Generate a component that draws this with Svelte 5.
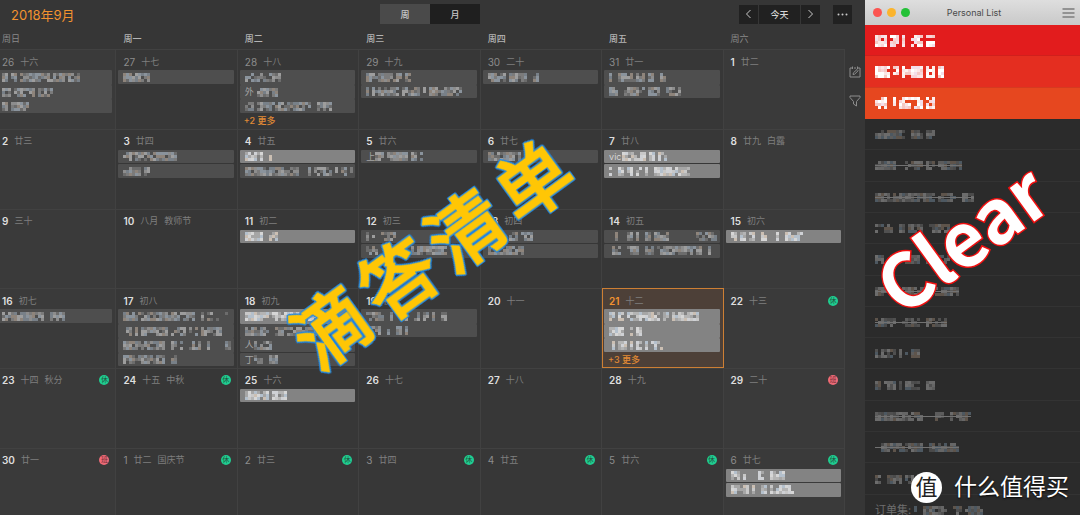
<script>
  const weekdays = ['周日', '周一', '周二', '周三', '周四', '周五', '周六'];

  // runs are [start, length] pairs, counted in mosaic cells
  const dim = (runs, joined = false, lead = '') => ({ tone: 'dim', runs, joined, lead });
  const lit = (runs, joined = false, lead = '') => ({ tone: 'lit', runs, joined, lead });

  const weeks = [
    [
      { d: 26, l: '十六', out: true, e: [dim([[0, 2], [3, 2], [6, 20]], true), dim([[0, 3], [4, 7], [12, 5]], true), dim([[0, 2], [3, 6]])] },
      { d: 27, l: '十七', out: true, e: [dim([[0, 9]])] },
      { d: 28, l: '十八', out: true, e: [dim([[0, 12]], true), dim([[0, 8]], true, '外'), dim([[0, 3], [4, 18], [24, 5]])], more: '+2 更多' },
      { d: 29, l: '十九', out: true, e: [dim([[0, 12], [13, 2]], true), dim([[0, 1], [2, 9], [12, 6], [19, 1], [21, 11]])] },
      { d: 30, l: '二十', out: true, e: [dim([[0, 6], [7, 6], [15, 2]])] },
      { d: 31, l: '廿一', out: true, e: [dim([[0, 1], [3, 9], [13, 2], [17, 2]], true), dim([[0, 3], [5, 7], [13, 4], [19, 5]])] },
      { d: 1, l: '廿二', e: [] }
    ],
    [
      { d: 2, l: '廿三', e: [] },
      { d: 3, l: '廿四', e: [dim([[0, 18]]), dim([[0, 6], [7, 2]])] },
      { d: 4, l: '廿五', e: [lit([[0, 6], [8, 1]]), dim([[0, 18], [21, 1], [23, 6], [30, 1], [32, 2], [35, 1]])] },
      { d: 5, l: '廿六', e: [dim([[0, 3], [4, 7], [12, 2], [15, 1]], false, '上')] },
      { d: 6, l: '廿七', e: [dim([[0, 11]])] },
      { d: 7, l: '廿八', e: [lit([[0, 8], [9, 2], [12, 3]], false, 'vic'), lit([[0, 1], [3, 2], [6, 2], [9, 2], [12, 1], [15, 12]])] },
      { d: 8, l: '廿九', f: '白露', e: [] }
    ],
    [
      { d: 9, l: '三十', e: [] },
      { d: 10, l: '八月', f: '教师节', e: [] },
      { d: 11, l: '初二', e: [lit([[0, 6], [8, 3]])] },
      { d: 12, l: '初三', e: [dim([[0, 1], [2, 1], [5, 5]]), dim([[0, 4], [12, 1], [15, 12]])] },
      { d: 13, l: '初四', e: [dim([[0, 5], [7, 3], [11, 4]]), dim([[0, 12]])] },
      { d: 14, l: '初五', e: [dim([[2, 1], [6, 2], [9, 1], [12, 2], [15, 5], [29, 7]]), dim([[1, 3], [6, 4], [12, 19], [33, 1]])] },
      { d: 15, l: '初六', e: [lit([[0, 2], [3, 2], [6, 2], [10, 2], [15, 1], [18, 6]])] }
    ],
    [
      { d: 16, l: '初七', e: [dim([[0, 14], [16, 5]])] },
      { d: 17, l: '初八', e: [dim([[0, 24], [26, 1], [28, 2], [31, 1], [34, 1]], true), dim([[1, 2], [4, 1], [6, 9], [16, 5], [22, 1], [24, 1], [26, 7]], true), dim([[0, 14], [16, 2], [19, 1], [22, 4], [28, 1], [34, 2]], true), dim([[0, 14], [16, 2]])] },
      { d: 18, l: '初九', e: [lit([[0, 24]], true), dim([[0, 8], [10, 14]], true), dim([[0, 6]], false, '人'), dim([[0, 3], [5, 3]], false, '丁')] },
      { d: 19, l: '初十', e: [dim([[0, 6], [8, 1], [12, 2], [16, 2], [19, 2], [22, 1], [25, 2]], true), dim([[0, 5], [7, 1], [10, 2], [13, 1]])] },
      { d: 20, l: '十一', e: [] },
      { d: 21, l: '十二', today: true, e: [lit([[0, 2], [3, 2], [6, 11], [18, 2], [21, 9]], true), lit([[0, 5], [7, 1], [9, 2]], true), lit([[0, 2], [3, 3], [7, 1], [9, 2], [12, 1], [14, 4]])], more: '+3 更多' },
      { d: 22, l: '十三', b: '休', e: [] }
    ],
    [
      { d: 23, l: '十四', f: '秋分', b: '休', e: [] },
      { d: 24, l: '十五', f: '中秋', b: '休', e: [] },
      { d: 25, l: '十六', e: [lit([[0, 8], [9, 5]])] },
      { d: 26, l: '十七', e: [] },
      { d: 27, l: '十八', e: [] },
      { d: 28, l: '十九', e: [] },
      { d: 29, l: '二十', b: '班', e: [] }
    ],
    [
      { d: 30, l: '廿一', b: '班', e: [] },
      { d: 1, l: '廿二', f: '国庆节', out: true, b: '休', e: [] },
      { d: 2, l: '廿三', out: true, b: '休', e: [] },
      { d: 3, l: '廿四', out: true, b: '休', e: [] },
      { d: 4, l: '廿五', out: true, b: '休', e: [] },
      { d: 5, l: '廿六', out: true, b: '休', e: [] },
      { d: 6, l: '廿七', out: true, b: '休', e: [lit([[0, 3], [4, 1], [9, 2], [13, 5]]), lit([[0, 6], [7, 1], [10, 2], [13, 8]])] }
    ]
  ];

  const tasks = [
    { runs: [[0, 4], [5, 3], [9, 1], [12, 4], [17, 3]], hot: 1 },
    { runs: [[0, 5], [6, 2], [9, 7], [17, 3], [21, 2]], hot: 2 },
    { runs: [[0, 4], [6, 1], [8, 8], [17, 3]], hot: 3 },
    { runs: [[0, 10], [12, 4], [17, 3]] },
    { runs: [[0, 7], [10, 10], [21, 8]], done: true },
    { runs: [[0, 20], [21, 6], [29, 4]], done: true },
    { runs: [[0, 6], [8, 2], [11, 5], [18, 7]] },
    { runs: [[0, 3], [5, 3], [10, 5], [17, 8]] },
    { runs: [[0, 4], [6, 22]], done: true },
    { runs: [[0, 7], [9, 6], [17, 7]], done: true },
    { runs: [[0, 7], [8, 1], [10, 1], [12, 3]] },
    { runs: [[0, 2], [3, 4], [8, 1], [10, 5], [17, 3]] },
    { runs: [[0, 16], [20, 3], [25, 7]], done: true },
    { runs: [[2, 14], [18, 10]], done: true },
    { runs: [[0, 2], [4, 5], [10, 3]] },
    { runs: [[1, 1], [4, 8], [14, 3], [18, 6]], lead: '订单集:' }
  ];

  const palettes = {
    dim: ['#8d8d8d', '#9d9d9d', '#7b7b7b', '#8a939c', '#788088', '#8e847b', '#6c6c6c'],
    lit: ['#c8c8c8', '#d6d6d6', '#b4b4b4', '#b4c0cc', '#cbbfb3', '#a6a6a6', '#cfd1d5'],
    hot: ['#ffffff', '#fbe6e6', '#f8d4d8', '#ffffff', '#f3dfea', '#fdf1ee', '#f5c9c4'],
    list: ['#5c5c5c', '#666666', '#505050', '#4d5861', '#5e544b', '#4a4a4a', '#6c6c6c']
  };

  // Deterministic mosaic cells, so a redacted title looks the same on each load
  function cells(runs, rows, palette, seed) {
    let s = (seed * 7919 + 104729) % 2147483647;
    const next = () => (s = (s * 16807) % 2147483647) / 2147483647;
    for (let i = 0; i < 4; i++) next();
    const out = [];
    for (const [start, len] of runs)
      for (let c = start; c < start + len; c++)
        for (let r = 0; r < rows; r++) {
          const keep = next() < 0.82;
          const fill = palettes[palette][Math.floor(next() * 7)];
          if (keep) out.push({ x: c * 3, y: r * 3, fill });
        }
    return out;
  }
  const extent = (runs) => Math.max(...runs.map(([a, n]) => a + n)) * 3;

  let view = $state('周');
</script>

{#snippet mosaic(runs, rows, palette, seed)}
  <svg class="mosaic" width={extent(runs)} height={rows * 3} shape-rendering="crispEdges" aria-hidden="true">
    {#each cells(runs, rows, palette, seed) as c}
      <rect x={c.x} y={c.y} width="3" height="3" fill={c.fill} />
    {/each}
  </svg>
{/snippet}

<main class="desk">
  <section class="calendar">
    <header class="toolbar">
      <h1>2018年9月</h1>
      <div class="segment">
        {#each ['周', '月'] as v}
          <button type="button" class:on={view === v} onclick={() => (view = v)}>{v}</button>
        {/each}
      </div>
      <div class="tools">
        <div class="pager">
          <button type="button" aria-label="上一页">
            <svg width="7" height="10" viewBox="0 0 7 10"><path d="M5.5 1 1.5 5l4 4" /></svg>
          </button>
          <button type="button" class="now">今天</button>
          <button type="button" aria-label="下一页">
            <svg width="7" height="10" viewBox="0 0 7 10"><path d="M1.5 1l4 4-4 4" /></svg>
          </button>
        </div>
        <button type="button" aria-label="更多">
          <svg width="11" height="3" viewBox="0 0 11 3"><g class="dots"><circle cx="1.5" cy="1.5" r="1" /><circle cx="5.5" cy="1.5" r="1" /><circle cx="9.5" cy="1.5" r="1" /></g></svg>
        </button>
      </div>
    </header>

    <div class="body">
      <div class="sheet">
        <table>
          <thead>
            <tr>{#each weekdays as w}<th scope="col">{w}</th>{/each}</tr>
          </thead>
          <tbody>
            {#each weeks as week, wi}
              <tr>
                {#each week as day, di}
                  <td class:today={day.today} class:out={day.out}>
                    <div class="date">
                      <b>{day.d}</b><span>{day.l}</span>{#if day.f}<span>{day.f}</span>{/if}
                      {#if day.b}<i class:work={day.b === '班'}>{day.b}</i>{/if}
                    </div>
                    {#if day.e.length}
                      <div class="events">
                        {#each day.e as ev, ei}
                          <div class="event {ev.tone}" class:joined={ev.joined}>
                            {#if ev.lead}<span>{ev.lead}</span>{/if}
                            {@render mosaic(ev.runs, 3, ev.tone, wi * 70 + di * 9 + ei + 1)}
                          </div>
                        {/each}
                        {#if day.more}<a href="#more">{day.more}</a>{/if}
                      </div>
                    {/if}
                  </td>
                {/each}
              </tr>
            {/each}
          </tbody>
        </table>
      </div>
      <nav class="rail">
        <button type="button" aria-label="安排任务">
          <svg width="12" height="12" viewBox="0 0 12 12"><path d="M3 2H1v9h10V2H9M3.500.5v2.500M8.500.5v2.500M5 2h2M4 8.500l.4-1.700L8 3.500l1.200 1.200L5.600 8.200z" /></svg>
        </button>
        <button type="button" aria-label="筛选">
          <svg width="12" height="12" viewBox="0 0 12 12"><path d="M1 1h10v1.500L7.500 6.500V11l-3-2V6.500L1 2.500z" /></svg>
        </button>
      </nav>
    </div>
    <div class="stamp app-a"><span>滴</span><span>答</span><span>清</span><span>单</span></div>
  </section>

  <section class="list">
    <header class="titlebar">
      <div class="lights"><i></i><i></i><i></i></div>
      <h2>Personal List</h2>
      <button type="button" aria-label="Menu">
        <svg width="13" height="10" viewBox="0 0 13 10"><path d="M.5 1h12M.5 5h12M.5 9h12" /></svg>
      </button>
    </header>
    <ul>
      {#each tasks as t, i}
        <li class={t.hot ? `hot${t.hot}` : ''}>
          <div class="task" class:done={t.done}>
            {#if t.lead}<span>{t.lead}</span>{/if}
            {@render mosaic(t.runs, t.hot ? 4 : 3, t.hot ? 'hot' : 'list', 500 + i * 3)}
          </div>
        </li>
      {/each}
    </ul>
    <div class="stamp app-b">Clear</div>
    <div class="brand"><span class="seal">值</span><span>什么值得买</span></div>
  </section>
</main>

<style>
  :global(body) {
    margin: 0;
    background: #363636;
  }
  .desk {
    display: grid;
    grid-template-columns: minmax(0, 1fr) 215px;
    height: 100vh;
    overflow: hidden;
    font-family: Inter, 'Noto Sans CJK SC', sans-serif;
    font-size: 9px;
    color: #c9c9c9;
  }
  h1, h2, ul {
    margin: 0;
    padding: 0;
    font-weight: 400;
  }
  button {
    display: flex;
    align-items: center;
    justify-content: center;
    padding: 0;
    border: 0;
    background: none;
    color: inherit;
    font: inherit;
  }
  svg {
    display: block;
    fill: none;
    stroke: currentColor;
  }
  .calendar, .list {
    position: relative;
    display: flex;
    flex-direction: column;
    min-width: 0;
    min-height: 0;
  }
  .calendar {
    background: #363636;
  }
  .toolbar {
    display: grid;
    grid-template-columns: 1fr auto 1fr;
    align-items: center;
    height: 29px;
    padding: 0 13px 2px 8px;
    margin-bottom: -1px;
  }
  h1 {
    padding: 1px 0 0 3px;
    font-size: 13px;
    line-height: 20px;
    color: #f2922f;
  }
  .segment {
    display: flex;
  }
  .segment button {
    width: 50px;
    height: 20px;
    background: #1f1f1f;
    font-weight: 500;
  }
  .segment .on {
    background: #4a4a4a;
  }
  .tools {
    display: flex;
    justify-content: flex-end;
    gap: 13px;
  }
  .pager {
    display: flex;
    gap: 1px;
  }
  .tools button {
    width: 19px;
    height: 19px;
    background: #212121;
  }
  .tools .now {
    width: 41px;
    font-weight: 500;
    color: #d6d6d6;
  }
  .dots {
    fill: #c9c9c9;
    stroke: none;
  }
  .body {
    display: grid;
    grid-template-columns: minmax(0, 1fr) 20px;
    min-height: 0;
  }
  .sheet {
    overflow: hidden;
  }
  table {
    width: calc(100% + 5px);
    height: calc(100vh - 17px);
    margin-left: -5px;
    border-spacing: 0;
    table-layout: fixed;
  }
  th {
    height: 20px;
    padding: 0 0 0 7px;
    font-weight: 500;
    line-height: 20px;
    text-align: left;
    color: #b4b4b4;
  }
  th:first-child, th:last-child {
    font-weight: 400;
    color: #8a8a8a;
  }
  td {
    padding: 0;
    border-top: 1px solid #414141;
    border-right: 1px solid #414141;
    background: #373737;
    vertical-align: top;
  }
  td:first-child, td:last-child {
    background: #3a3a3a;
  }
  .date {
    display: flex;
    align-items: center;
    gap: 6px;
    height: 20px;
    padding: 3px 6px 0 7px;
    box-sizing: border-box;
    color: #7f7f7f;
    line-height: 12px;
  }
  .date b {
    font-size: 10px;
    font-weight: 600;
    color: #dedede;
  }
  .out .date b {
    font-weight: 400;
    color: #8c8c8c;
  }
  .date i {
    width: 10px;
    height: 10px;
    margin-left: auto;
    border-radius: 50%;
    background: #1fce91;
    color: #22543f;
    font-size: 7px;
    font-style: normal;
    line-height: 10px;
    text-align: center;
  }
  .date .work {
    background: #ef6b78;
    color: #6e2d34;
  }
  .events {
    display: grid;
    grid-template-rows: repeat(4, 1fr);
    height: 58px;
    padding: 0 3px 0 2px;
  }
  .event {
    display: flex;
    align-items: center;
    min-height: 0;
    margin-bottom: 1px;
    padding-left: 5px;
    border-radius: 1px;
    background: #4e4e4e;
    color: #a5a5a5;
    line-height: 12px;
    overflow: hidden;
  }
  .lit {
    background: #838383;
    color: #d5d5d5;
  }
  .joined {
    margin-bottom: 0;
  }
  .mosaic {
    flex: none;
    stroke: none;
  }
  .events a {
    padding-left: 4px;
    color: #e08a35;
    font-weight: 500;
    line-height: 14px;
    text-decoration: none;
  }
  td.today {
    background: #4d4038;
    outline: 1px solid #cd7f34;
    outline-offset: -1px;
  }
  .today .date b {
    color: #f2922f;
  }
  .rail {
    display: flex;
    flex-direction: column;
    align-items: center;
    gap: 17px;
    padding-top: 37px;
    color: #8d8d8d;
  }
  .list {
    background: #2b2b2b;
  }
  .titlebar {
    display: grid;
    grid-template-columns: 1fr auto 1fr;
    align-items: center;
    flex: none;
    height: 25px;
    padding: 0 5px 0 8px;
    background: linear-gradient(#dedede, #c9c9c9);
    color: #4a4a4a;
  }
  h2 {
    font-size: 9px;
    line-height: 12px;
  }
  .lights {
    display: flex;
    gap: 5px;
  }
  .lights i {
    width: 9px;
    height: 9px;
    border-radius: 50%;
    background: #fb5450;
  }
  .lights i:nth-child(2) {
    background: #fbb42d;
  }
  .lights i:nth-child(3) {
    background: #24c138;
  }
  .titlebar button {
    justify-self: end;
    color: #929292;
  }
  .titlebar path {
    stroke-width: 2;
  }
  ul {
    display: grid;
    grid-template-rows: repeat(16, 1fr);
    flex: none;
    height: calc(100vh - 14px);
    list-style: none;
  }
  li {
    display: flex;
    align-items: center;
    padding: 1px 0 0 10px;
    border-bottom: 1px solid #333;
    color: #6e6e6e;
  }
  .hot1 {
    background: #e21c1d;
    border-color: #d0201c;
  }
  .hot2 {
    background: #e42e20;
    border-color: #d63a20;
  }
  .hot3 {
    background: #e6471f;
    border-color: #e6471f;
  }
  .task {
    position: relative;
    display: flex;
    align-items: center;
    font-size: 11px;
    line-height: 12px;
  }
  .done::after {
    content: '';
    position: absolute;
    inset: 4px 0 auto;
    height: 1px;
    background: #727272;
  }
  .stamp {
    position: absolute;
    display: flex;
    transform: translate(-50%, -50%) rotate(-36deg);
    font-family: 'Noto Sans CJK SC', sans-serif;
    white-space: nowrap;
    line-height: 1;
    paint-order: stroke fill;
    pointer-events: none;
  }
  .app-a {
    left: 430px;
    top: 251px;
    gap: 9px;
    font-size: 74px;
    font-weight: 400;
    color: #ffc605;
    -webkit-text-stroke: 3px #ffc605;
    filter: drop-shadow(1px 0 #1b86ea) drop-shadow(-1px 0 #1b86ea) drop-shadow(0 1px #1b86ea) drop-shadow(0 -1px #1b86ea);
  }
  .app-b {
    left: 95px;
    top: 236px;
    font-size: 74px;
    font-weight: 600;
    color: #fff;
    -webkit-text-stroke: 3px #f01010;
  }
  .brand {
    position: absolute;
    right: 11px;
    bottom: 12px;
    display: flex;
    align-items: center;
    gap: 12px;
    color: #fff;
    font-size: 23px;
    line-height: 31px;
    text-shadow: 0 1px 2px #000;
    white-space: nowrap;
  }
  .seal {
    width: 31px;
    height: 31px;
    border-radius: 50%;
    background: #fff;
    color: #222;
    font-size: 22px;
    text-align: center;
    text-shadow: none;
  }
</style>
